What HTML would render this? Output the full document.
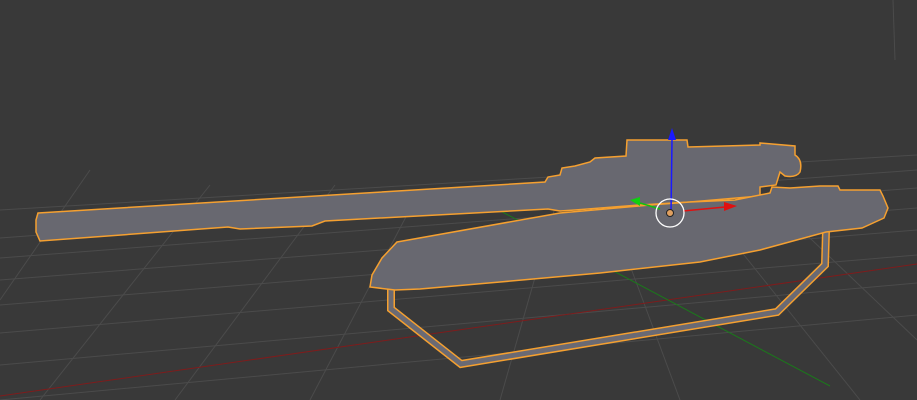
<!DOCTYPE html>
<html><head><style>html,body{margin:0;padding:0;background:#393939;overflow:hidden}svg{display:block}</style></head>
<body>
<svg width="917" height="400" viewBox="0 0 917 400" xmlns="http://www.w3.org/2000/svg">
<rect width="917" height="400" fill="#393939"/>
<g stroke="#4b4b4b" stroke-width="1" fill="none">
<line x1="0" y1="238" x2="917" y2="170"/>
<line x1="0" y1="258" x2="917" y2="188"/>
<line x1="0" y1="280" x2="917" y2="208"/>
<line x1="0" y1="305" x2="917" y2="230"/>
<line x1="0" y1="333" x2="917" y2="255"/>
<line x1="0" y1="365" x2="917" y2="283"/>
<line x1="0" y1="400" x2="917" y2="315"/>
<line x1="0" y1="210" x2="917" y2="155"/>
<line x1="0" y1="300" x2="90" y2="170"/>
<line x1="40" y1="400" x2="210" y2="185"/>
<line x1="175" y1="400" x2="335" y2="185"/>
<line x1="310" y1="400" x2="420" y2="190"/>
<line x1="500" y1="400" x2="560" y2="190"/>
<line x1="680" y1="400" x2="600" y2="185"/>
<line x1="860" y1="400" x2="700" y2="200"/>
<line x1="917" y1="340" x2="770" y2="200"/>
<line x1="893" y1="0" x2="895" y2="60"/>
</g>
<line x1="0" y1="396" x2="917" y2="264" stroke="#7e1c1c" stroke-width="1"/>
<line x1="493" y1="207" x2="830" y2="386" stroke="#1a7a1a" stroke-width="1"/>
<!-- track -->
<path d="M391 288 L391 309 L461 364 L777 312 L825 265 L826 230" fill="none" stroke="#f5a030" stroke-width="8" stroke-linejoin="miter"/>
<path d="M391 288 L391 309 L461 364 L777 312 L825 265 L826 230" fill="none" stroke="#6a6a74" stroke-width="5"/>
<!-- barrel & turret -->
<path d="M38 213 L545 182 L548 177 L560 175 L562 168 L575 166 L590 162 L595 158 L626 156 L627 140 L687 140 L688 147 L760 145 L760 143 L795 146 L795 155 Q803 160 800 172 Q796 178 785 176 L780 172 L776 185 L760 187 L760 196 L690 202 L640 205 L575 210 L560 211 L548 209 L325 221 L312 226 L240 229 L228 227 L40 241 L36 232 L36 220 Z" fill="#686870" stroke="#f5a030" stroke-width="1.5"/>
<!-- hull -->
<path d="M397 242 L560 213 L650 205 L690 202 L735 200 L770 193 L772 187 L790 188 L820 186 L838 186 L840 190 L880 190 L883 196 L888 208 L884 218 L862 228 L826 232 L760 250 L700 262 L600 273 L500 282 L420 289 L395 290 L370 287 L372 275 L382 258 Z" fill="#686870" stroke="#f5a030" stroke-width="1.5"/>
<!-- gizmo -->
<line x1="671" y1="213" x2="672" y2="140" stroke="#1a1aff" stroke-width="1.5"/>
<polygon points="672,128 668,140 676,140" fill="#1a1aff"/>
<line x1="683" y1="211" x2="725" y2="207" stroke="#e01010" stroke-width="1.5"/>
<polygon points="737,206 724,202 724,211" fill="#e01010"/>
<line x1="660" y1="209" x2="640" y2="203" stroke="#10c010" stroke-width="1.5"/>
<polygon points="630,200 640,197 640,206" fill="#10d010"/>
<circle cx="670" cy="213" r="14" fill="none" stroke="#fff" stroke-width="1.3"/>
<circle cx="670" cy="213" r="3.5" fill="#e0a060" stroke="#222" stroke-width="1"/>
</svg>
</body></html>
